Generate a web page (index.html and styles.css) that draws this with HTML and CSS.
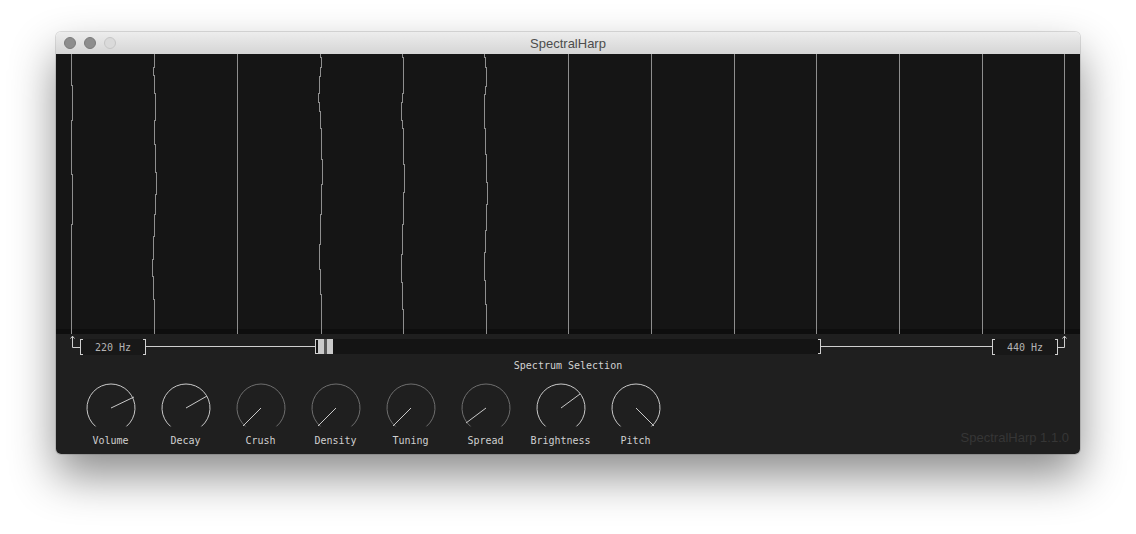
FILE: index.html
```html
<!DOCTYPE html>
<html>
<head>
<meta charset="utf-8">
<title>SpectralHarp</title>
<link rel="stylesheet" href="styles.css">
</head>
<body>
<div class="window">
  <div class="titlebar">
    <div class="lights">
      <span class="light"></span>
      <span class="light"></span>
      <span class="light off"></span>
    </div>
    <div class="title">SpectralHarp</div>
    <div></div>
  </div>

  <div class="spectrum">
    <svg class="strings" width="1024" height="280" viewBox="0 0 1024 280">
      <rect x="0" y="275" width="1024" height="5" fill="#0e0e0e"/>
      <g fill="none" stroke="#8e8e8e" stroke-width="1" shape-rendering="crispEdges">
        <path d="M15.5 0 V31 H16.5 V66 H15.5 V120 H16.5 V170 H15.5 V280"/>
        <path d="M98.5 0 V13 H97.5 V21 H98.5 V39 H99.5 V66 H98.5 V90 H99.5 V118 H100.5 V140 H99.5 V160 H98.5 V182 H97.5 V205 H96.5 V222 H97.5 V245 H98.5 V280"/>
        <path d="M181.5 0 V280"/>
        <path d="M264.5 0 V3 H265.5 V13 H264.5 V22 H263.5 V39 H262.5 V48 H263.5 V57 H264.5 V74 H265.5 V105 H266.5 V130 H265.5 V160 H264.5 V190 H263.5 V215 H264.5 V240 H265.5 V280"/>
        <path d="M346.5 0 V3 H347.5 V39 H346.5 V48 H345.5 V66 H346.5 V74 H347.5 V110 H348.5 V138 H347.5 V170 H346.5 V200 H345.5 V228 H346.5 V255 H347.5 V280"/>
        <path d="M428.5 0 V3 H429.5 V13 H430.5 V32 H429.5 V40 H428.5 V74 H429.5 V100 H430.5 V128 H431.5 V150 H430.5 V176 H429.5 V198 H428.5 V226 H429.5 V250 H430.5 V280"/>
        <path d="M512.5 0 V280"/>
        <path d="M595.5 0 V280"/>
        <path d="M678.5 0 V280"/>
        <path d="M760.5 0 V280"/>
        <path d="M843.5 0 V280"/>
        <path d="M926.5 0 V280"/>
        <path d="M1008.5 0 V280"/>
      </g>
    </svg>
  </div>

  <div class="panel">
    <div class="slider-row">
      <svg class="end" width="10" height="13" viewBox="0 0 10 13">
        <path d="M2.5 1 V12.5 H10 M0.5 3.5 L2.5 1.2 L4.5 3.5" fill="none" stroke="#cfcfcf" stroke-width="1"/>
      </svg>
      <div class="freq">220 Hz</div>
      <div class="rail rail-left"></div>
      <div class="track">
        <div class="thumb"><span class="grip"></span><span class="grip"></span></div>
      </div>
      <div class="rail rail-right"></div>
      <div class="freq">440 Hz</div>
      <svg class="end" width="10" height="13" viewBox="0 0 10 13">
        <path d="M0 12.5 H6.5 V1 M4.5 3.5 L6.5 1.2 L8.5 3.5" fill="none" stroke="#cfcfcf" stroke-width="1"/>
      </svg>
    </div>

    <div class="caption">Spectrum Selection</div>

    <div class="knob-row">
      <div class="knob">
        <svg width="52" height="52" viewBox="0 0 52 52"><path class="arc bright" d="M10.57 44.39 A24 24 0 1 1 41.43 44.39"/><line class="ptr" x1="26" y1="26" x2="49" y2="15"/></svg>
        <div class="label">Volume</div>
      </div>
      <div class="knob">
        <svg width="52" height="52" viewBox="0 0 52 52"><path class="arc bright" d="M10.57 44.39 A24 24 0 1 1 41.43 44.39"/><line class="ptr" x1="26" y1="26" x2="47" y2="14"/></svg>
        <div class="label">Decay</div>
      </div>
      <div class="knob">
        <svg width="52" height="52" viewBox="0 0 52 52"><path class="arc dim" d="M10.57 44.39 A24 24 0 1 1 41.43 44.39"/><line class="ptr" x1="26" y1="26" x2="8" y2="44"/></svg>
        <div class="label">Crush</div>
      </div>
      <div class="knob">
        <svg width="52" height="52" viewBox="0 0 52 52"><path class="arc dim" d="M10.57 44.39 A24 24 0 1 1 41.43 44.39"/><line class="ptr" x1="26" y1="26" x2="8" y2="44"/></svg>
        <div class="label">Density</div>
      </div>
      <div class="knob">
        <svg width="52" height="52" viewBox="0 0 52 52"><path class="arc dim" d="M10.57 44.39 A24 24 0 1 1 41.43 44.39"/><line class="ptr" x1="26" y1="26" x2="8" y2="44"/></svg>
        <div class="label">Tuning</div>
      </div>
      <div class="knob">
        <svg width="52" height="52" viewBox="0 0 52 52"><path class="arc dim" d="M10.57 44.39 A24 24 0 1 1 41.43 44.39"/><line class="ptr" x1="26" y1="26" x2="6" y2="41"/></svg>
        <div class="label">Spread</div>
      </div>
      <div class="knob">
        <svg width="52" height="52" viewBox="0 0 52 52"><path class="arc bright" d="M10.57 44.39 A24 24 0 1 1 41.43 44.39"/><line class="ptr" x1="26" y1="26" x2="45" y2="12"/></svg>
        <div class="label">Brightness</div>
      </div>
      <div class="knob">
        <svg width="52" height="52" viewBox="0 0 52 52"><path class="arc bright" d="M10.57 44.39 A24 24 0 1 1 41.43 44.39"/><line class="ptr" x1="26" y1="26" x2="44" y2="44"/></svg>
        <div class="label">Pitch</div>
      </div>
      <div class="version">SpectralHarp 1.1.0</div>
    </div>
  </div>
</div>
</body>
</html>
```

FILE: styles.css
```css
html, body {
  margin: 0;
  padding: 0;
}

body {
  background: #ffffff;
  width: 1136px;
  height: 534px;
  overflow: hidden;
}

.window {
  margin: 32px 0 0 56px;
  width: 1024px;
  border-radius: 5px;
  overflow: hidden;
  box-shadow: 0 22px 45px rgba(0, 0, 0, 0.45), 0 0 0 1px rgba(0, 0, 0, 0.12);
}

.titlebar {
  height: 22px;
  background: linear-gradient(#ededed, #d5d5d5);
  display: grid;
  grid-template-columns: 1fr auto 1fr;
  align-items: center;
}

.lights {
  display: flex;
  gap: 8px;
  padding-left: 8px;
}

.light {
  width: 12px;
  height: 12px;
  box-sizing: border-box;
  border-radius: 50%;
  background: #8d8d8d;
  border: 1px solid #7b7b7b;
}

.light.off {
  background: #dadada;
  border-color: #c5c5c5;
}

.title {
  font-family: "Liberation Sans", Arial, sans-serif;
  font-size: 13px;
  color: #4d4d4d;
}

.spectrum {
  height: 280px;
  background: #151515;
}

.strings {
  display: block;
}

.panel {
  background: #1f1f1f;
  height: 120px;
  display: flex;
  flex-direction: column;
  font-family: "DejaVu Sans Mono", "Liberation Mono", monospace;
  font-size: 10px;
}

.slider-row {
  display: flex;
  align-items: flex-start;
  padding: 1px 12px 0 14px;
  height: 20px;
}

.end {
  display: block;
  flex: none;
}

.freq {
  position: relative;
  flex: none;
  width: 66px;
  height: 16px;
  margin-top: 4px;
  background: #181818;
  color: #b4b4b4;
  line-height: 18px;
  text-align: center;
}

.freq::before,
.track::before {
  content: "";
  position: absolute;
  left: 0;
  top: 0;
  bottom: 0;
  width: 3px;
  box-sizing: border-box;
  border: 1px solid #cfcfcf;
  border-right: none;
}

.freq::after,
.track::after {
  content: "";
  position: absolute;
  right: 0;
  top: 0;
  bottom: 0;
  width: 3px;
  box-sizing: border-box;
  border: 1px solid #cfcfcf;
  border-left: none;
}

.rail {
  flex: none;
  height: 1px;
  margin-top: 11px;
  background: #cfcfcf;
}

.rail-left {
  width: 169px;
}

.rail-right {
  width: 171px;
}

.track {
  position: relative;
  flex: none;
  width: 506px;
  height: 15px;
  margin-top: 4px;
  background: #141414;
  display: flex;
}

.thumb {
  display: flex;
  margin-left: 3px;
  background: #555555;
  gap: 3px;
}

.grip {
  width: 6px;
  background: #c9c9c9;
}

.caption {
  margin-top: 4px;
  line-height: 14px;
  text-align: center;
  color: #d2d2d2;
}

.knob-row {
  display: flex;
  align-items: flex-start;
  margin-top: 9px;
  padding: 0 11px 0 17px;
}

.knob {
  width: 75px;
  display: flex;
  flex-direction: column;
  align-items: center;
}

.knob svg {
  display: block;
}

.arc {
  fill: none;
  stroke-width: 1;
}

.arc.bright {
  stroke: #c9c9c9;
}

.arc.dim {
  stroke: #6e6e6e;
}

.ptr {
  stroke: #c9c9c9;
  stroke-width: 1;
}

.label {
  line-height: 13px;
  color: #d0d0d0;
}

.version {
  margin-left: auto;
  margin-top: 48px;
  font-family: "Liberation Sans", Arial, sans-serif;
  font-size: 13px;
  color: #363636;
}
```
